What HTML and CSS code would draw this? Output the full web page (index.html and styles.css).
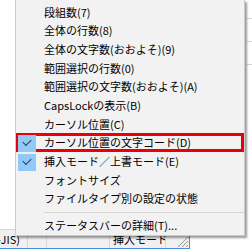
FILE: index.html
```html
<!DOCTYPE html>
<html lang="ja">
<head>
  <meta charset="UTF-8" />
  <title>ステータスバー</title>
  <link rel="stylesheet" href="styles.css">
</head>
<body>
<div class="screen">
  <div class="window">
    <div class="editor"></div>
    <div class="statusbar">
      <span class="panel enc">-JIS)</span>
      <span class="panel blank"></span>
      <span class="panel wide"></span>
      <span class="panel mode">挿入モード</span>
      <span class="panel grip">
        <svg width="14" height="14" viewBox="0 0 14 14">
          <path d="M13 3 L3 13 M13 7 L7 13 M13 11 L11 13" stroke="#9a9a9a" stroke-width="1" />
        </svg>
      </span>
    </div>
  </div>

  <div class="ticks">
    <i></i><i></i><i></i>
  </div>

  <!-- ステータスバーの右クリックメニュー -->
  <ul class="menu">
    <li class="item">段組数(7)</li>
    <li class="item">全体の行数(8)</li>
    <li class="item">全体の文字数(おおよそ)(9)</li>
    <li class="item">範囲選択の行数(0)</li>
    <li class="item">範囲選択の文字数(おおよそ)(A)</li>
    <li class="item">CapsLockの表示(B)</li>
    <li class="item">カーソル位置(C)</li>
    <li class="item checked marked">カーソル位置の文字コード(D)</li>
    <li class="item checked">挿入モード／上書モード(E)</li>
    <li class="item">フォントサイズ</li>
    <li class="item">ファイルタイプ別の設定の状態</li>
    <li class="sep"></li>
    <li class="item">ステータスバーの詳細(T)...</li>
  </ul>
</div>
</body>
</html>
```
FILE: styles.css
```css
body {
    margin: 0;
    background-color: #ffffff;
    font-family: "Noto Sans CJK JP", "Noto Sans", sans-serif;
    color: #000;
}
.screen {
    position: relative;
    width: 252px;
    height: 250px;
    overflow: hidden;
}
.window {
    width: 189px;
    height: 248px;
    display: flex;
    flex-direction: column;
    border-right: 1px solid #4a90d9;
    border-bottom: 1px solid #4a90d9;
}
.editor {
    flex: 1;
    background-color: #ffffff;
}
.statusbar {
    height: 18px;
    display: flex;
    background-color: #f0f0f0;
    border-top: 1px solid #d7d7d7;
    font-size: 11px;
    line-height: 18px;
}
.panel {
    border-right: 1px solid #d7d7d7;
    white-space: nowrap;
    overflow: hidden;
}
.enc {
    width: 27px;
    text-indent: -3px;
}
.blank {
    width: 18px;
}
.wide {
    width: 62px;
}
.mode {
    width: 52px;
    padding-left: 3px;
}
.grip {
    flex: 1;
    border-right: none;
    display: flex;
    align-items: flex-end;
    justify-content: flex-end;
}
.ticks {
    position: absolute;
    left: 247px;
    top: 18px;
    display: flex;
    flex-direction: column;
    gap: 22px;
}
.ticks i {
    display: block;
    width: 5px;
    height: 1px;
    background-color: #d4d4d4;
}
.menu {
    position: absolute;
    left: 15px;
    top: 0;
    width: 228px;
    margin: 0;
    padding: 2.6px 0 0 0;
    list-style: none;
    background-color: #f2f2f2;
    border: 1px solid #cccccc;
    border-top: none;
    box-shadow: 2px 2px 2px rgba(0, 0, 0, 0.4);
    font-size: 11px;
}
.item {
    position: relative;
    height: 18.7px;
    line-height: 18.7px;
    padding-left: 28px;
    white-space: nowrap;
}
.item.checked::before {
    content: "";
    position: absolute;
    left: 2px;
    top: 2px;
    width: 18px;
    height: 17px;
    background-color: #91c9f7;
}
.item.checked::after {
    content: "";
    position: absolute;
    left: 7px;
    top: 6px;
    width: 7px;
    height: 4px;
    border-left: 1.6px solid #24384c;
    border-bottom: 1.6px solid #24384c;
    transform: rotate(-45deg);
}
.marked {
    outline: 3px solid #e8000b;
    outline-offset: -3px;
}
.sep {
    height: 8.3px;
    display: flex;
    align-items: center;
    padding-left: 28px;
}
.sep::after {
    content: "";
    flex: 1;
    height: 1px;
    background-color: #d7d7d7;
}
```
